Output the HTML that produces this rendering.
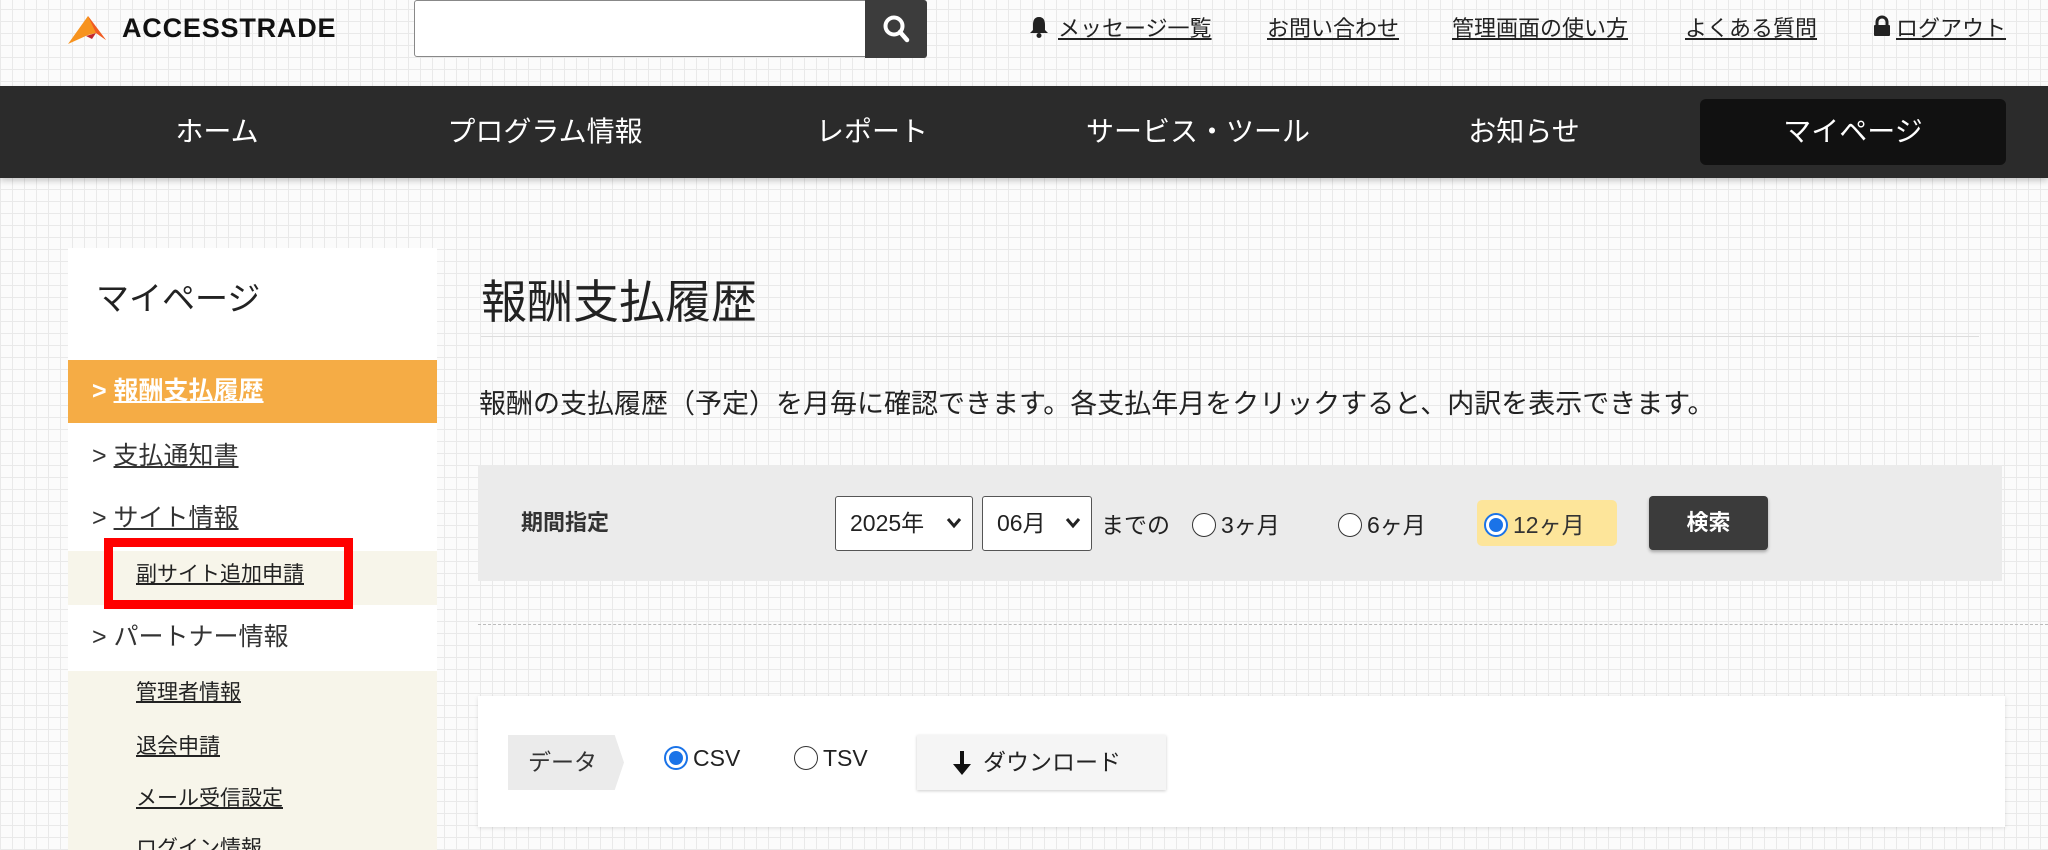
<!DOCTYPE html>
<html><head><meta charset="utf-8"><style>
*{margin:0;padding:0;box-sizing:border-box}
html{width:2048px;height:850px;overflow:hidden}
body{width:2048px;height:850px;overflow:hidden;position:relative;font-family:"Liberation Sans","Noto Sans CJK JP",sans-serif;color:#222;
background-color:#fbfbfb;
background-image:repeating-linear-gradient(0deg,#e9e9e9 0 1px,transparent 1px 12px),repeating-linear-gradient(90deg,#e9e9e9 0 1px,transparent 1px 12px);}
.a{position:absolute;white-space:nowrap}
.tl{font-size:22px;color:#222;text-decoration:underline;top:11px}
.nav{position:absolute;left:0;top:86px;width:2048px;height:92px;background:#2b2b2b;box-shadow:0 3px 6px rgba(0,0,0,.2)}
.ni{position:absolute;top:0;line-height:92px;color:#fff;font-size:28px;transform:translateX(-50%)}
.side{position:absolute;left:68px;top:248px;width:369px;height:602px;background:#fff;overflow:hidden}
.si{position:absolute;left:0;width:369px;font-size:25px}
.si u{text-decoration:underline}
.sub{font-size:21px;position:absolute;left:68px;text-decoration:underline;color:#222;line-height:26px}
.radio{display:inline-block;width:24px;height:24px;border:1.5px solid #333;border-radius:50%;vertical-align:middle;margin-right:5px;position:relative;top:-2px;background:#fff}
.radio.on{border:2px solid #1a73e8}
.radio.on:after{content:"";position:absolute;left:3px;top:3px;width:14px;height:14px;border-radius:50%;background:#1a73e8}
.sel{position:absolute;top:496px;height:55px;background:#fff;border:1.5px solid #555;border-radius:3px;font-size:23px;line-height:52px;padding-left:14px}
.sel svg{position:absolute;right:10px;top:20px}
</style></head><body>
<svg class="a" style="left:66px;top:14px" width="48" height="30" viewBox="0 0 48 30"><path d="M2 30 L22 2 L40 26 L30 19 L22 21 Z" fill="#f7931e"/><path d="M22 2 L40 26 L30 19 Z" fill="#f15a24"/><path d="M20 22 L30 19 L26 25Z" fill="#c1272d"/></svg>
<div class="a" style="left:122px;top:13px;font-size:27px;font-weight:bold;letter-spacing:0.8px;color:#111">ACCESSTRADE</div>
<div class="a" style="left:414px;top:0;width:452px;height:57px;background:#fff;border:1.5px solid #888;border-radius:3px 0 0 3px"></div>
<div class="a" style="left:865px;top:0;width:62px;height:58px;background:#3c3c3c;border-radius:0 3px 3px 0"></div>
<svg class="a" style="left:882px;top:14px" width="28" height="30" viewBox="0 0 28 30"><circle cx="12" cy="12" r="8.5" stroke="#fff" stroke-width="4" fill="none"/><path d="M18 18 L25 26" stroke="#fff" stroke-width="4.5" stroke-linecap="round"/></svg>
<svg class="a" style="left:1029px;top:16px" width="20" height="22" viewBox="0 0 20 22"><path d="M10 1 C5 1 4 5 4 9 L4 14 L1 17 L19 17 L16 14 L16 9 C16 5 15 1 10 1Z" fill="#222"/><circle cx="10" cy="19.5" r="2.5" fill="#222"/></svg>
<div class="a tl" style="left:1058px">メッセージ一覧</div>
<div class="a tl" style="left:1267px">お問い合わせ</div>
<div class="a tl" style="left:1452px">管理画面の使い方</div>
<div class="a tl" style="left:1685px">よくある質問</div>
<svg class="a" style="left:1873px;top:15px" width="18" height="22" viewBox="0 0 18 22"><path d="M4 10 V7 A5 5 0 0 1 14 7 V10" stroke="#222" stroke-width="3" fill="none"/><rect x="1" y="10" width="16" height="11" rx="1" fill="#222"/></svg>
<div class="a tl" style="left:1896px">ログアウト</div>
<div class="nav">
<div class="ni" style="left:217px">ホーム</div>
<div class="ni" style="left:545px">プログラム情報</div>
<div class="ni" style="left:872px">レポート</div>
<div class="ni" style="left:1198px">サービス・ツール</div>
<div class="ni" style="left:1524px">お知らせ</div>
<div class="a" style="left:1700px;top:13px;width:306px;height:66px;background:#111;border-radius:6px;color:#fff;font-size:28px;line-height:66px;text-align:center">マイページ</div>
</div>
<div class="side">
<div class="si" style="top:24px;left:28px;font-size:33px;color:#222">マイページ</div>
<div class="si" style="top:112px;height:63px;background:#f5ac45;color:#fff;font-weight:bold;line-height:63px;padding-left:24px">&gt; <u>報酬支払履歴</u></div>
<div class="si" style="top:190px;line-height:36px;padding-left:24px;color:#333">&gt; <u>支払通知書</u></div>
<div class="si" style="top:252px;line-height:36px;padding-left:24px;color:#333">&gt; <u>サイト情報</u></div>
<div class="si" style="top:303px;height:54px;background:#f7f5ea"></div>
<div class="sub" style="top:314px">副サイト追加申請</div>
<div class="si" style="top:371px;line-height:36px;padding-left:24px;color:#333">&gt; パートナー情報</div>
<div class="si" style="top:423px;height:179px;background:#f7f5ea"></div>
<div class="sub" style="top:432px">管理者情報</div>
<div class="sub" style="top:486px">退会申請</div>
<div class="sub" style="top:538px">メール受信設定</div>
<div class="sub" style="top:588px">ログイン情報</div>
</div>
<div class="a" style="left:104px;top:538px;width:249px;height:71px;border:9px solid #f00"></div>
<div class="a" style="left:481px;top:266px;font-size:46px;color:#222">報酬支払履歴</div>
<div class="a" style="left:481px;top:336px;width:1498px;height:1px;background:#ddd"></div>
<div class="a" style="left:479px;top:382px;font-size:27px;color:#222">報酬の支払履歴（予定）を月毎に確認できます。各支払年月をクリックすると、内訳を表示できます。</div>
<div class="a" style="left:478px;top:465px;width:1524px;height:116px;background:#ebebeb"></div>
<div class="a" style="left:521px;top:505px;font-size:22px;font-weight:bold;color:#333">期間指定</div>
<div class="sel" style="left:835px;width:138px">2025年 <svg width="16" height="12" viewBox="0 0 16 12"><path d="M2 2 L8 9 L14 2" stroke="#222" stroke-width="3" fill="none"/></svg></div>
<div class="sel" style="left:982px;width:110px">06月 <svg width="16" height="12" viewBox="0 0 16 12"><path d="M2 2 L8 9 L14 2" stroke="#222" stroke-width="3" fill="none"/></svg></div>
<div class="a" style="left:1101px;top:506px;font-size:23px">までの</div>
<div class="a" style="left:1192px;top:506px;font-size:23px"><span class="radio"></span>3ヶ月</div>
<div class="a" style="left:1338px;top:506px;font-size:23px"><span class="radio"></span>6ヶ月</div>
<div class="a" style="left:1477px;top:500px;width:140px;height:46px;background:#fde59a;border-radius:5px"></div>
<div class="a" style="left:1484px;top:506px;font-size:23px;color:#333"><span class="radio on"></span>12ヶ月</div>
<div class="a" style="left:1649px;top:496px;width:119px;height:54px;background:#3b3b3b;border-radius:4px;color:#fff;font-size:22px;font-weight:bold;line-height:54px;text-align:center;box-shadow:0 2px 3px rgba(0,0,0,.3)">検索</div>
<div class="a" style="left:478px;top:624px;width:1570px;border-top:1.5px dashed #bbb"></div>
<div class="a" style="left:478px;top:696px;width:1527px;height:131px;background:#fff;box-shadow:0 1px 4px rgba(0,0,0,.12)"></div>
<div class="a" style="left:508px;top:735px;width:116px;height:55px;background:#ebebeb;clip-path:polygon(0 0,92% 0,100% 50%,92% 100%,0 100%);font-size:23px;line-height:55px;padding-left:20px;color:#333">データ</div>
<div class="a" style="left:664px;top:745px;font-size:23px"><span class="radio on"></span>CSV</div>
<div class="a" style="left:794px;top:745px;font-size:23px"><span class="radio"></span>TSV</div>
<div class="a" style="left:917px;top:735px;width:249px;height:55px;background:#f5f5f5;box-shadow:0 1px 3px rgba(0,0,0,.2);font-size:23px;line-height:55px;padding-left:66px">ダウンロード</div>
<svg class="a" style="left:951px;top:750px" width="22" height="26" viewBox="0 0 22 26"><path d="M11 1 V20" stroke="#111" stroke-width="4"/><path d="M2 14 L11 25 L20 14Z" fill="#111"/></svg>
</body></html>
